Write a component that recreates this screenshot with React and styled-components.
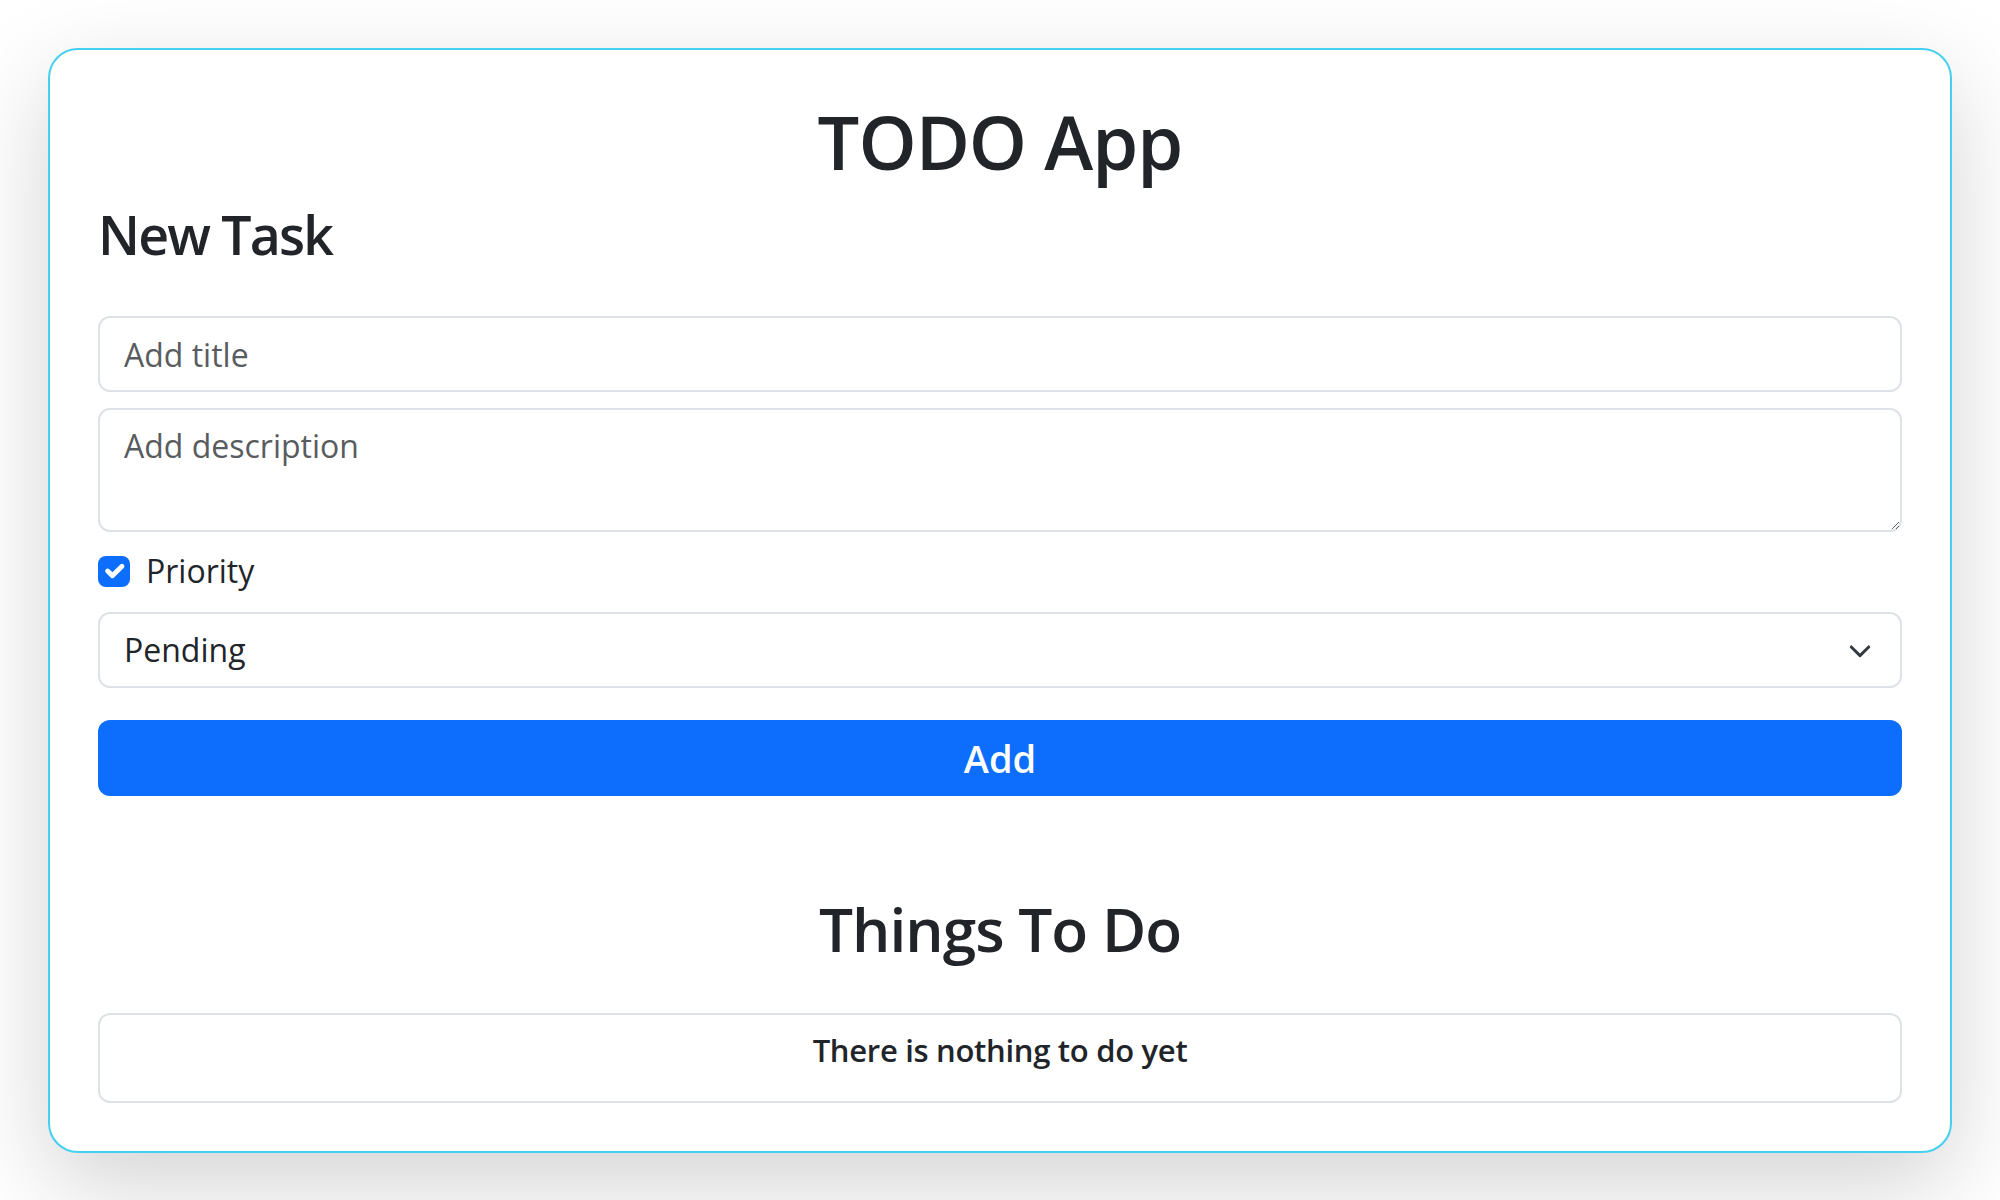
import React from "react";
import styled, { createGlobalStyle } from "styled-components";

const Global = createGlobalStyle`
  html, body { margin: 0; padding: 0; background: #ffffff; }
  body {
    font-family: "Open Sans", "Noto Sans", "Liberation Sans", sans-serif;
    color: #212529;
  }
  * { box-sizing: border-box; }
`;

const Page = styled.div`
  padding: 48px;
  min-height: 1200px;
`;

const Card = styled.main`
  display: flex;
  flex-direction: column;
  border: 2px solid #45d0f0;
  border-radius: 30px;
  padding: 48px;
  background: #ffffff;
  box-shadow: 0 32px 96px rgba(0, 0, 0, 0.175);
`;

const AppTitle = styled.h1`
  margin: 0 0 16px;
  font-size: 74px;
  line-height: 1.2;
  font-weight: 600;
  letter-spacing: -1px;
  text-align: center;
`;

const Heading = styled.h2`
  margin: ${(p) => p.$mt || 0}px 0 ${(p) => p.$mb || 0}px;
  font-size: ${(p) => p.$size}px;
  line-height: 1.2;
  font-weight: 600;
  letter-spacing: ${(p) => p.$ls || -1}px;
  text-align: ${(p) => (p.$center ? "center" : "left")};
`;

const Form = styled.form`
  display: flex;
  flex-direction: column;
`;

const fieldBase = `
  display: block;
  width: 100%;
  font-family: "Open Sans", "Noto Sans", "Liberation Sans", sans-serif;
  font-size: 32px;
  line-height: 1.5;
  color: #212529;
  background: #ffffff;
  border: 2px solid #dee2e6;
  border-radius: 12px;
  outline: none;
  &::placeholder { color: #595c5f; opacity: 1; }
`;

const TextInput = styled.input`
  ${fieldBase}
  height: 76px;
  padding: 12px 24px;
  margin-bottom: 16px;
`;

const TextArea = styled.textarea`
  ${fieldBase}
  height: 124px;
  padding: 12px 24px;
  margin-bottom: 15px;
  resize: vertical;
`;

const CheckRow = styled.label`
  display: flex;
  align-items: center;
  gap: 16px;
  height: 48px;
  margin-bottom: 17px;
  font-size: 32px;
  line-height: 1.5;
  cursor: pointer;
`;

const CheckBox = styled.span`
  display: flex;
  align-items: center;
  justify-content: center;
  width: 32px;
  height: 31px;
  border-radius: 8px;
  background: #0d6efd;
  flex: none;
`;

const SelectWrap = styled.div`
  position: relative;
  margin-bottom: 32px;
`;

const Select = styled.select`
  ${fieldBase}
  appearance: none;
  -webkit-appearance: none;
  height: 76px;
  padding: 12px 72px 12px 24px;
`;

const Chevron = styled.svg`
  position: absolute;
  right: 30px;
  top: 50%;
  width: 24px;
  height: 16px;
  margin-top: -6px;
  pointer-events: none;
`;

const AddButton = styled.button`
  height: 76px;
  width: 100%;
  border: none;
  border-radius: 12px;
  background: #0d6efd;
  color: #ffffff;
  font-family: "Open Sans", "Noto Sans", "Liberation Sans", sans-serif;
  font-size: 38px;
  font-weight: 600;
  cursor: pointer;
`;

const ListBox = styled.ul`
  margin: 0;
  padding: 0;
  list-style: none;
  border: 2px solid #dee2e6;
  border-radius: 12px;
`;

const ListItem = styled.li`
  padding: 16px 32px;
`;

const EmptyText = styled.h6`
  margin: 0 0 16px;
  font-size: 31px;
  line-height: 1.24;
  font-weight: 600;
  letter-spacing: -0.3px;
  text-align: center;
`;

export default function App() {
  return (
    <Page>
      <Global />
      <Card>
        <AppTitle>TODO App</AppTitle>
        <Heading as="h3" $size={53.6} $mb={49} $ls={-1.8}>
          New Task
        </Heading>
        <Form onSubmit={(e) => e.preventDefault()}>
          <TextInput type="text" placeholder="Add title" />
          <TextArea placeholder="Add description" />
          <CheckRow>
            <CheckBox>
              <svg width="32" height="32" viewBox="0 0 20 20" fill="none">
                <path
                  d="m6 10 3 3 6-6"
                  stroke="#fff"
                  strokeWidth="3"
                  strokeLinecap="round"
                  strokeLinejoin="round"
                />
              </svg>
            </CheckBox>
            Priority
          </CheckRow>
          <SelectWrap>
            <Select defaultValue="Pending">
              <option>Pending</option>
              <option>In Progress</option>
              <option>Done</option>
            </Select>
            <Chevron viewBox="0 0 16 11" fill="none">
              <path
                d="m2 2 6 6 6-6"
                stroke="#343a40"
                strokeWidth="2"
                strokeLinecap="round"
                strokeLinejoin="round"
              />
            </Chevron>
          </SelectWrap>
          <AddButton type="submit">Add</AddButton>
        </Form>
        <Heading $size={60.4} $center $mt={97} $mb={47}>
          Things To Do
        </Heading>
        <ListBox>
          <ListItem>
            <EmptyText>There is nothing to do yet</EmptyText>
          </ListItem>
        </ListBox>
      </Card>
    </Page>
  );
}
